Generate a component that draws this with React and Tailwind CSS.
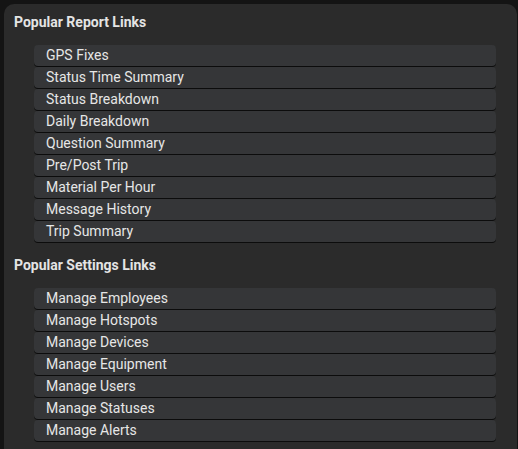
const reportLinks = [
  'GPS Fixes',
  'Status Time Summary',
  'Status Breakdown',
  'Daily Breakdown',
  'Question Summary',
  'Pre/Post Trip',
  'Material Per Hour',
  'Message History',
  'Trip Summary',
];

const settingsLinks = [
  'Manage Employees',
  'Manage Hotspots',
  'Manage Devices',
  'Manage Equipment',
  'Manage Users',
  'Manage Statuses',
  'Manage Alerts',
];

function LinkSection({ title, links }) {
  return (
    <div className="mb-[13px]">
      <div className="h-5 leading-5 text-[14px] font-bold text-[#e4e4e4] pl-[10px]">{title}</div>
      <ul className="mt-[13px] ml-[30px] mr-[21px]">
        {links.map(label => (
          <li key={label}
            className="h-[21px] mb-px pl-3 flex items-center rounded-[4px] bg-[#353638] text-[14px] text-[#e6e6e6] shadow-[0_1px_0_#0c0c0c] cursor-pointer hover:bg-[#3d3e40]"
          >
            {label}
          </li>
        ))}
      </ul>
    </div>
  );
}

export default function App() {
  return (
    <div className="w-[518px] h-[449px] overflow-hidden bg-[#141414] pt-1 pl-1 pr-px font-['Roboto',sans-serif]">
      <div className="h-[460px] bg-[#2b2b2b] rounded-t-[10px] pt-2">
        <LinkSection title="Popular Report Links" links={reportLinks} />
        <LinkSection title="Popular Settings Links" links={settingsLinks} />
      </div>
    </div>
  );
}
